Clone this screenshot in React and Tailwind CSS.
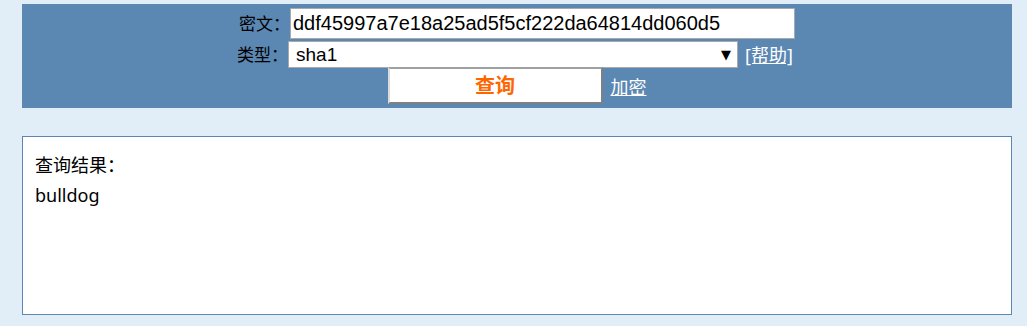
export default function App() {
  return (
    <div className="min-h-[326px] bg-[#e1edf7] pt-1 font-['Noto_Sans','Noto_Sans_CJK_SC',sans-serif] text-black">
      {/* query panel */}
      <div className="ml-[22px] flex w-[990px] flex-col bg-[#5b87b3] pt-1 pb-1">
        <div className="flex h-[31px] items-center justify-center">
          <span className="w-[51px] text-[17px] leading-none">密文：</span>
          <input
            readOnly
            value="ddf45997a7e18a25ad5f5cf222da64814dd060d5"
            className="h-[31px] w-[505px] border border-[#a9a9a9] bg-white px-[2px] font-['Liberation_Sans',Arial,sans-serif] text-[20px] text-black outline-none"
          />
        </div>
        <div className="mt-[2px] flex h-[27px] items-center justify-center">
          <span className="w-[51px] text-[17px] leading-none">类型：</span>
          <div className="flex h-[27px] w-[450px] items-center justify-between border border-[#a9a9a9] bg-white pr-[6px] pl-[7px]">
            <span className="font-['Liberation_Sans',Arial,sans-serif] text-[19px] leading-none">
              sha1
            </span>
            <span className="font-['DejaVu_Sans',sans-serif] text-[13px] leading-none">
              ▼
            </span>
          </div>
          <a
            href="#"
            className="ml-[7px] w-[52px] text-[18px] leading-none text-white underline"
          >
            [帮助]
          </a>
        </div>
        <div className="-mt-px flex h-[37px] items-center justify-center">
          <button className="h-[37px] w-[215px] border-2 border-t-[#a0a0a0] border-r-[#808080] border-b-[#808080] border-l-[#dcdcdc] bg-white text-[20px] leading-none font-bold text-[#ff6600]">
            查询
          </button>
          <a
            href="#"
            className="ml-2 mt-[3px] w-[36px] text-[18px] leading-none text-white underline"
          >
            加密
          </a>
        </div>
      </div>

      {/* result */}
      <div className="mt-[28px] ml-[22px] h-[179px] w-[990px] border border-[#5b87b3] bg-white pt-[13px] pl-3 text-[18px] leading-[30px]">
        <div>查询结果：</div>
        <div>bulldog</div>
      </div>
    </div>
  );
}
